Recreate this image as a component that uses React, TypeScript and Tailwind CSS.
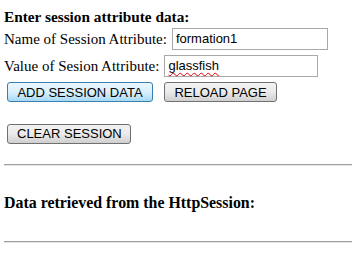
import React from "react";

const serif = { fontFamily: '"Liberation Serif", "Times New Roman", serif' };

export default function App() {
  const arial = "font-['Liberation_Sans',Arial,sans-serif]";
  const btn =
    "h-[20px] px-[9px] whitespace-nowrap rounded-[3px] border border-[#707070] bg-gradient-to-b from-[#f2f2f2] via-[#ebebeb] to-[#cfcfcf] text-[13px] leading-none text-black " +
    arial;
  return (
    <div className="w-[352px] h-[253px] bg-white overflow-hidden text-black font-['Liberation_Serif',serif]">
      <div className="pl-[4px] pt-[8px]">
        <div className="text-[15.3px] font-bold leading-[18px]">Enter session attribute data:</div>
        <div className="mt-[2px] flex items-center h-[22px] text-[15px]">
          <span>Name of Session Attribute:</span>
          <div className={`ml-[5px] w-[156px] h-[22px] border border-[#a9a9a9] px-[3px] flex items-center text-[13px] ${arial}`}>
            formation1
          </div>
        </div>
        <div className="mt-[5px] flex items-center h-[22px] text-[15px]">
          <span>Value of Sesion Attribute:</span>
          <div className={`ml-[5px] w-[154px] h-[22px] border border-[#a9a9a9] px-[3px] flex items-center text-[13px] ${arial}`}>
            <span className="underline decoration-wavy decoration-[#e00000] decoration-1 underline-offset-2">glassfish</span>
          </div>
        </div>
        <div className="mt-[5px] flex items-center pl-[3px] gap-[11px]">
          <button
            className={`h-[20px] w-[146px] whitespace-nowrap rounded-[3px] border border-[#3c7fb1] bg-gradient-to-b from-[#eaf6fd] via-[#d9f0fc] to-[#a7d9f5] text-[13px] leading-none text-black ${arial}`}
          >
            ADD SESSION DATA
          </button>
          <button className={`${btn} w-[113px]`}>RELOAD PAGE</button>
        </div>
        <div className="mt-[19px] pl-[3px]">
          <button className={`${btn} w-[124px]`}>CLEAR SESSION</button>
        </div>
        <div className="mt-[19px] h-[2px] border-t border-[#a0a0a0] border-b border-b-[#e3e3e3]" />
        <div className="mt-[28px] text-[15.9px] font-bold leading-[18px]" style={serif}>
          Data retrieved from the HttpSession:
        </div>
        <div className="mt-[29px] h-[2px] border-t border-[#a0a0a0] border-b border-b-[#e3e3e3]" />
      </div>
    </div>
  );
}
